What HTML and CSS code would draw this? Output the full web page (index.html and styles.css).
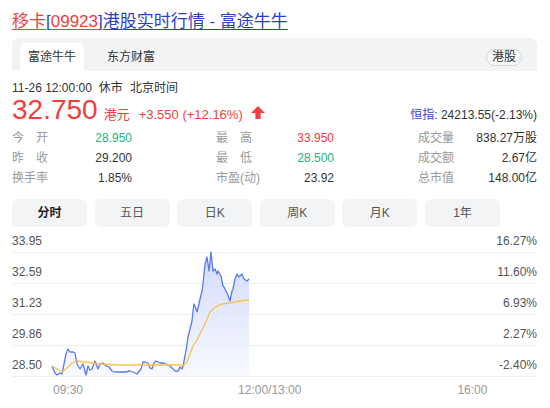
FILE: index.html
```html
<!DOCTYPE html>
<html lang="zh-CN">
<head>
<meta charset="utf-8">
<title>移卡[09923]港股实时行情</title>
<link rel="stylesheet" href="styles.css">
</head>
<body>
<div class="page">
  <a class="title" href="#"><span class="r">移卡</span><span class="b">[</span><span class="r">09923</span><span class="b">]港股实时行情 - 富途牛牛</span></a>

  <div class="tabbar">
    <div class="tab active">富途牛牛</div>
    <div class="tab">东方财富</div>
    <div class="pill">港股</div>
  </div>

  <div class="dateline">11-26 12:00:00<span class="gap">休市</span><span class="gap">北京时间</span></div>

  <div class="pricerow">
    <div class="priceleft"><span class="price">32.750</span><span class="cur">港元</span><span class="chg">+3.550 (+12.16%)</span><svg class="arrow" width="14" height="13" viewBox="0 0 14 13"><path d="M7 0 L14 7 L9.6 7 L9.6 13 L4.4 13 L4.4 7 L0 7 Z" fill="#f23d3d"/></svg></div>
    <div class="index"><span class="blue">恒指</span>: 24213.55(-2.13%)</div>
  </div>

  <div class="stats">
    <div class="cell"><span class="lab sp">今开</span><span class="val green">28.950</span></div>
    <div class="cell"><span class="lab sp">最高</span><span class="val red">33.950</span></div>
    <div class="cell"><span class="lab">成交量</span><span class="val">838.27万股</span></div>
    <div class="cell"><span class="lab sp">昨收</span><span class="val">29.200</span></div>
    <div class="cell"><span class="lab sp">最低</span><span class="val green">28.500</span></div>
    <div class="cell"><span class="lab">成交额</span><span class="val">2.67亿</span></div>
    <div class="cell"><span class="lab">换手率</span><span class="val">1.85%</span></div>
    <div class="cell"><span class="lab">市盈(动)</span><span class="val">23.92</span></div>
    <div class="cell"><span class="lab">总市值</span><span class="val">148.00亿</span></div>
  </div>

  <div class="periods">
    <div class="pbtn on">分时</div>
    <div class="pbtn">五日</div>
    <div class="pbtn">日K</div>
    <div class="pbtn">周K</div>
    <div class="pbtn">月K</div>
    <div class="pbtn">1年</div>
  </div>

  <div class="chart">
    <div class="row first"><span>33.95</span><span>16.27%</span></div>
    <div class="row"><span>32.59</span><span>11.60%</span></div>
    <div class="row"><span>31.23</span><span>6.93%</span></div>
    <div class="row"><span>29.86</span><span>2.27%</span></div>
    <div class="row"><span>28.50</span><span>-2.40%</span></div>
    <svg class="plot" width="525" height="149" viewBox="0 0 525 149">
      <defs>
        <linearGradient id="fillg" x1="0" y1="0" x2="0" y2="1">
          <stop offset="0" stop-color="#c9d4fa"/>
          <stop offset="1" stop-color="#f7f9ff"/>
        </linearGradient>
      </defs>
      <g transform="translate(-12 -229)">
        <polygon fill="url(#fillg)" opacity="0.85" points="52,367 55,374 57,376 60,374 62,375 64,365 66,355 68,350 70,353 73,353 75,354 77,365 80,370 83,365 86,376 88,367 90,371 92,370 95,362 98,370 100,365 103,364 106,367 109,368 112,372 115,373 120,373 125,373 130,372 133,373 137,375 141,370 143,363 145,363 148,364 150,369 152,370 154,364 156,362 160,364 163,364 166,365 170,367 173,370 175,372 178,372 180,368 182,370 183,367 185,357 187,345 188,338 190,330 192,322 193,312 194,305 196,310 197,313 199,305 200,300 202,292 203,285 204,275 205,265 207,258 209,272 211,253 213,272 215,270 217,275 218,272 221,277 223,287 224,288 226,292 228,296 230,302 232,292 233,290 235,280 237,275 239,278 242,275 244,280 247,282 249,280 249,377 52,377"/>
        <polyline fill="none" stroke="#5a78f0" stroke-width="1.3" stroke-linejoin="round" points="52,367 55,374 57,376 60,374 62,375 64,365 66,355 68,350 70,353 73,353 75,354 77,365 80,370 83,365 86,376 88,367 90,371 92,370 95,362 98,370 100,365 103,364 106,367 109,368 112,372 115,373 120,373 125,373 130,372 133,373 137,375 141,370 143,363 145,363 148,364 150,369 152,370 154,364 156,362 160,364 163,364 166,365 170,367 173,370 175,372 178,372 180,368 182,370 183,367 185,357 187,345 188,338 190,330 192,322 193,312 194,305 196,310 197,313 199,305 200,300 202,292 203,285 204,275 205,265 207,258 209,272 211,253 213,272 215,270 217,275 218,272 221,277 223,287 224,288 226,292 228,296 230,302 232,292 233,290 235,280 237,275 239,278 242,275 244,280 247,282 249,280"/>
        <polyline fill="none" stroke="#f8c24c" stroke-width="1.3" stroke-linejoin="round" points="52,367 57,370 62,373 67,369 72,364 77,362 85,363 100,365 120,366 140,366 184,366 187,363 190,355 193,347 197,341 201,333 205,325 210,313 215,308 222,305 230,304 240,302 249,301"/>
      </g>
    </svg>
  </div>

  <div class="times"><span class="t1">09:30</span><span class="t2">12:00/13:00</span><span class="t3">16:00</span></div>
</div>
</body>
</html>
```

FILE: styles.css
```css
* { box-sizing: border-box; }
html, body { margin: 0; padding: 0; background: #ffffff; }
body {
  font-family: "Liberation Sans", "Noto Sans CJK SC", sans-serif;
  color: #333333;
}
.page {
  width: 525px;
  margin-left: 12px;
  padding-top: 11px;
}

.title {
  display: block;
  font-size: 17px;
  line-height: 22px;
  text-decoration: none;
  white-space: nowrap;
}
.title .r { color: #f03c3c; text-decoration: underline; text-underline-offset: 2px; }
.title .b { color: #2f3fc4; text-decoration: underline; text-underline-offset: 2px; }

.tabbar {
  margin-top: 5px;
  height: 33px;
  background: #f2f3f5;
  border-radius: 7px 7px 0 0;
  display: flex;
  align-items: flex-end;
  padding: 0 15px 0 8px;
  font-size: 12px;
}
.tab {
  height: 28px;
  line-height: 28px;
  padding: 0 8px;
  color: #333333;
}
.tab + .tab { margin-left: 15px; }
.tab.active {
  background: #ffffff;
  border-radius: 6px 6px 0 0;
}
.pill {
  margin-left: auto;
  margin-bottom: 5px;
  height: 17px;
  line-height: 15px;
  padding: 0 5px;
  border: 1px solid #d3d5d9;
  border-radius: 9px;
  color: #333333;
  background: #f6f7f8;
}

.dateline {
  margin-top: 9px;
  font-size: 12px;
  line-height: 16px;
  color: #333333;
}
.dateline .gap { margin-left: 7px; }

.pricerow {
  display: flex;
  align-items: baseline;
  justify-content: space-between;
  color: #f23d3d;
}
.priceleft {
  font-size: 28px;
  line-height: 28px;
  white-space: nowrap;
}
.price { font-size: 28px; }
.cur { font-size: 13px; line-height: 13px; margin-left: 6px; }
.chg { font-size: 13px; line-height: 13px; margin-left: 9px; }
.arrow { margin-left: 8px; vertical-align: baseline; }
.index {
  font-size: 12px;
  line-height: 14px;
  color: #333333;
}
.blue { color: #3346c8; }

.stats {
  margin-top: 4px;
  display: grid;
  grid-template-columns: 120px 118px 119px;
  justify-content: space-between;
  font-size: 12px;
  line-height: 20px;
}
.cell {
  display: flex;
  justify-content: space-between;
  white-space: nowrap;
}
.lab { color: #999999; }
.lab.sp { letter-spacing: 12px; }
.val { color: #333333; }
.val.green { color: #1fb47f; }
.val.red { color: #f23d3d; }

.periods {
  margin-top: 11px;
  display: flex;
  gap: 7.6px;
}
.pbtn {
  width: 75px;
  height: 28px;
  line-height: 28px;
  text-align: center;
  background: #f3f4f6;
  border-radius: 6px;
  font-size: 12px;
  color: #555555;
}
.pbtn.on { font-weight: bold; color: #222222; }

.chart {
  position: relative;
  margin-top: 1px;
}
.row {
  height: 31px;
  border-bottom: 1px solid #eceef1;
  display: flex;
  justify-content: space-between;
  align-items: flex-end;
  font-size: 12px;
  line-height: 22px;
  color: #555555;
}
.row.first { height: 25px; }
.plot {
  position: absolute;
  left: 0;
  top: 0;
}

.times {
  display: flex;
  padding-top: 3px;
  font-size: 12px;
  line-height: 20px;
  color: #999999;
  white-space: nowrap;
}
.t1 { margin-left: 41px; }
.t2 { margin-left: 155px; }
.t3 { margin-left: 156px; }
```
